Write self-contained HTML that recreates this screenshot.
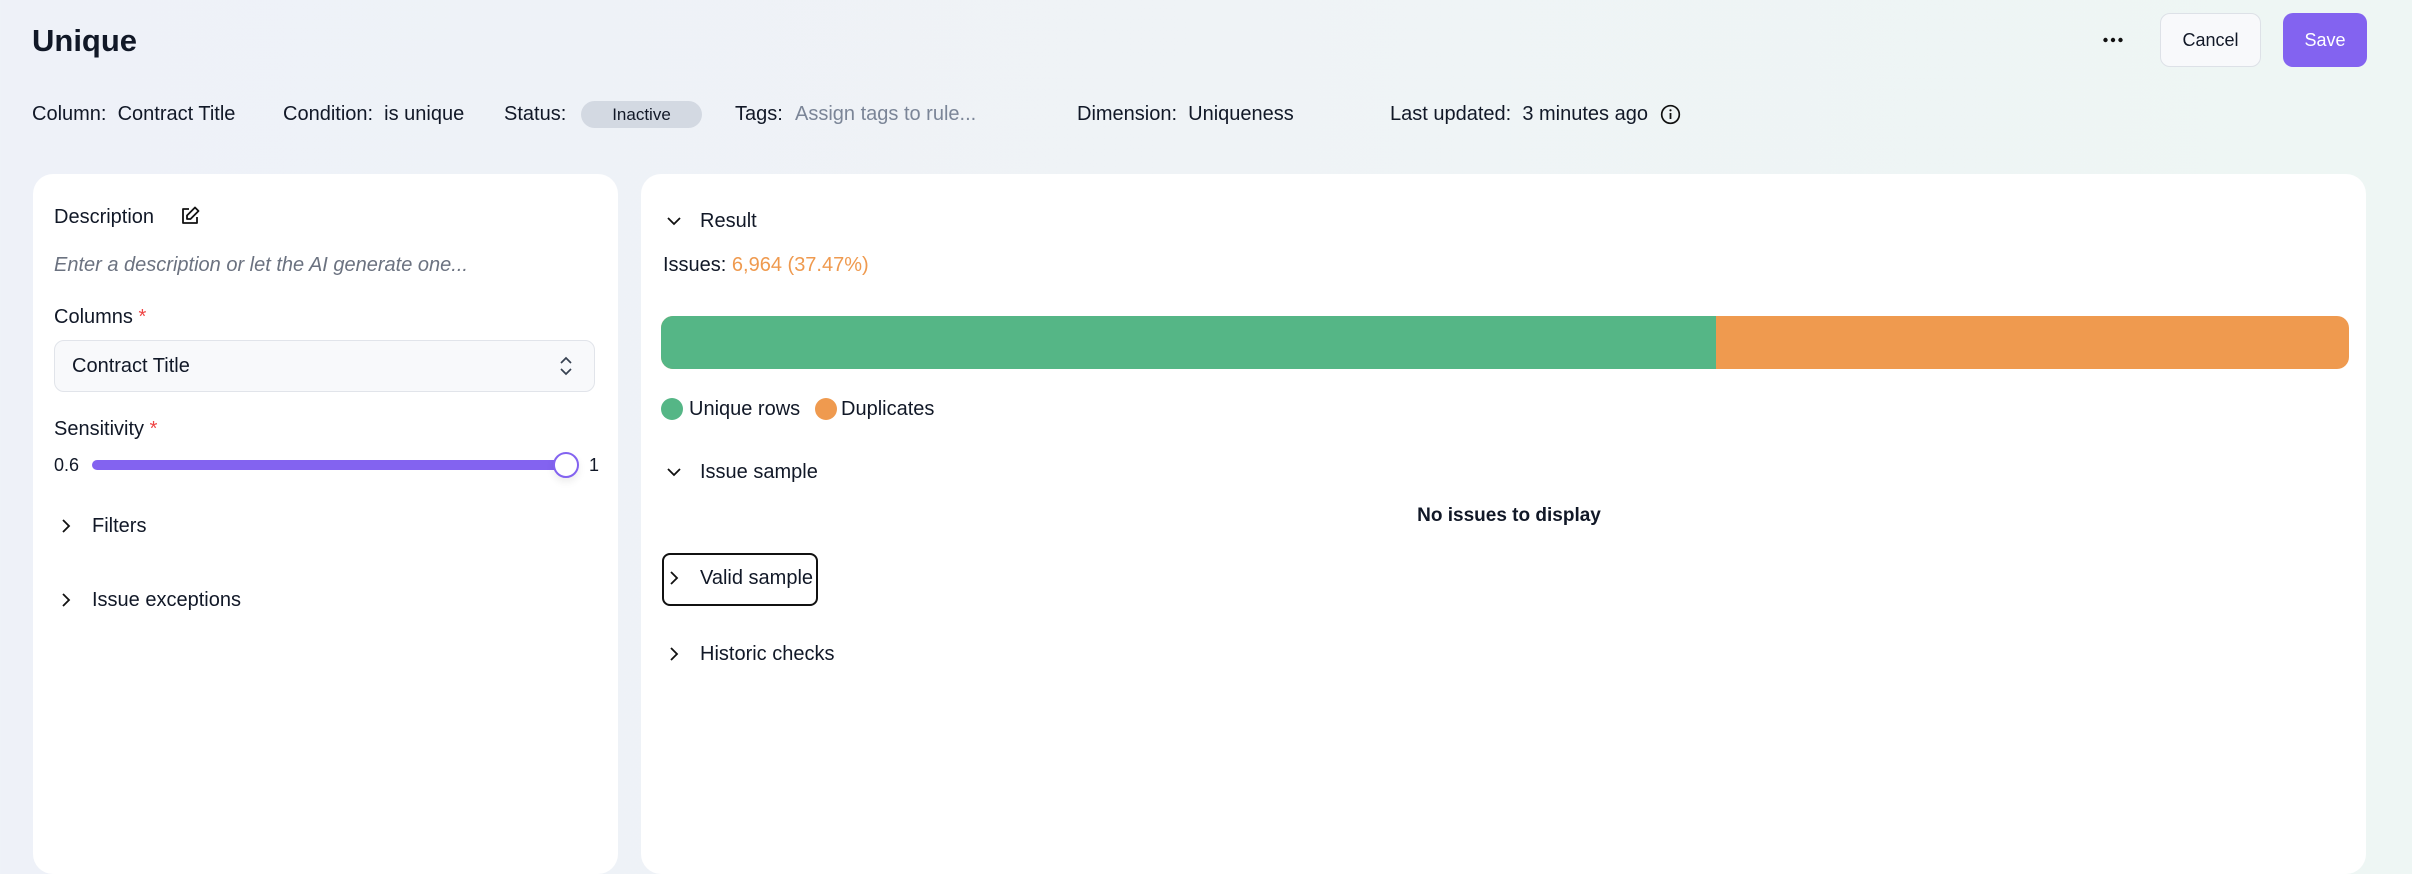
<!DOCTYPE html>
<html><head><meta charset="utf-8"><style>
*{box-sizing:border-box;margin:0;padding:0}
body{width:2412px;height:818px;overflow:hidden;font-family:"Liberation Sans",sans-serif;color:#111827;background:linear-gradient(90deg,#eef1f8 0%,#eff3f6 50%,#eef6f4 100%);position:relative;font-size:20px}
.a{position:absolute;white-space:nowrap;line-height:1}
.card{position:absolute;background:#fff;border-radius:20px;top:174px;height:700px}
</style></head><body>
<div class="a" style="left:32px;top:25px;font-size:31px;font-weight:bold">Unique</div>

<svg class="a" style="left:2102px;top:36px" width="22" height="8"><circle cx="3.5" cy="4" r="2.2" fill="#111"/><circle cx="11" cy="4" r="2.2" fill="#111"/><circle cx="18.5" cy="4" r="2.2" fill="#111"/></svg>
<div class="a" style="left:2160px;top:13px;width:101px;height:54px;border:1.5px solid #dde1e7;border-radius:10px;background:#f8f9fb;display:flex;align-items:center;justify-content:center;font-size:18px">Cancel</div>
<div class="a" style="left:2283px;top:13px;width:84px;height:54px;border-radius:10px;background:#8363f0;color:#fff;display:flex;align-items:center;justify-content:center;font-size:18px">Save</div>

<div class="a" style="left:32px;top:104px">Column:&nbsp; Contract Title</div>
<div class="a" style="left:283px;top:104px">Condition:&nbsp; is unique</div>
<div class="a" style="left:504px;top:104px">Status:</div>
<div class="a" style="left:581px;top:101px;width:121px;height:27px;border-radius:14px;background:#d3d9e2;font-size:17px;display:flex;align-items:center;justify-content:center">Inactive</div>
<div class="a" style="left:735px;top:104px">Tags:</div>
<div class="a" style="left:795px;top:104px;color:#7b8597">Assign tags to rule...</div>
<div class="a" style="left:1077px;top:104px">Dimension:&nbsp; Uniqueness</div>
<div class="a" style="left:1390px;top:104px">Last updated:&nbsp; 3 minutes ago</div>
<svg class="a" style="left:1660px;top:104px" width="21" height="21" viewBox="0 0 21 21"><circle cx="10.5" cy="10.5" r="8.8" fill="none" stroke="#111" stroke-width="1.7"/><line x1="10.5" y1="9" x2="10.5" y2="15" stroke="#111" stroke-width="1.8"/><circle cx="10.5" cy="6.3" r="1.1" fill="#111"/></svg>

<div class="card" style="left:33px;width:585px"></div>
<div class="card" style="left:641px;width:1725px"></div>

<div class="a" style="left:54px;top:207px">Description</div>
<svg class="a" style="left:179px;top:205px" width="22" height="22" viewBox="0 0 22 22" fill="none" stroke="#111" stroke-width="1.8" stroke-linejoin="round"><path d="M10 4H4v14h14v-6"/><path d="M16 2.5l3.5 3.5-8 8H8v-3.5z"/></svg>
<div class="a" style="left:54px;top:255px;font-style:italic;color:#6b7280">Enter a description or let the AI generate one...</div>
<div class="a" style="left:54px;top:307px">Columns <span style="color:#ef4444">*</span></div>
<div class="a" style="left:54px;top:340px;width:541px;height:52px;border:1.5px solid #e1e4ea;border-radius:10px;background:#f8f9fb"></div>
<div class="a" style="left:72px;top:356px">Contract Title</div>
<svg class="a" style="left:558px;top:355px" width="16" height="22" viewBox="0 0 16 22" fill="none" stroke="#374151" stroke-width="1.7"><path d="M3 8l5-5 5 5M3 14l5 5 5-5"/></svg>
<div class="a" style="left:54px;top:419px">Sensitivity <span style="color:#ef4444">*</span></div>
<div class="a" style="left:54px;top:456px;font-size:18px">0.6</div>
<div class="a" style="left:92px;top:460px;width:474px;height:10px;border-radius:5px;background:#8363f0"></div>
<div class="a" style="left:553px;top:452px;width:26px;height:26px;border-radius:50%;background:#fff;border:2px solid #8363f0;box-shadow:0 4px 8px rgba(0,0,0,.08)"></div>
<div class="a" style="left:589px;top:456px;font-size:18px">1</div>
<svg class="a" style="left:60px;top:517px" width="12" height="18" viewBox="0 0 12 18" fill="none" stroke="#111" stroke-width="1.8"><path d="M3 3l6 6-6 6"/></svg>
<div class="a" style="left:92px;top:516px">Filters</div>
<svg class="a" style="left:60px;top:591px" width="12" height="18" viewBox="0 0 12 18" fill="none" stroke="#111" stroke-width="1.8"><path d="M3 3l6 6-6 6"/></svg>
<div class="a" style="left:92px;top:590px">Issue exceptions</div>

<svg class="a" style="left:665px;top:214px" width="18" height="14" viewBox="0 0 18 14" fill="none" stroke="#111" stroke-width="1.8"><path d="M3 4l6 6 6-6"/></svg>
<div class="a" style="left:700px;top:211px">Result</div>
<div class="a" style="left:663px;top:255px">Issues: <span style="color:#ef9a4f">6,964 (37.47%)</span></div>
<div class="a" style="left:661px;top:316px;width:1688px;height:53px;border-radius:12px;background:#ef9a4f;overflow:hidden"><div style="width:1055px;height:100%;background:#55b686"></div></div>
<div class="a" style="left:661px;top:398px;width:22px;height:22px;border-radius:50%;background:#55b686"></div>
<div class="a" style="left:689px;top:399px">Unique rows</div>
<div class="a" style="left:815px;top:398px;width:22px;height:22px;border-radius:50%;background:#ef9a4f"></div>
<div class="a" style="left:841px;top:399px">Duplicates</div>
<svg class="a" style="left:665px;top:465px" width="18" height="14" viewBox="0 0 18 14" fill="none" stroke="#111" stroke-width="1.8"><path d="M3 4l6 6 6-6"/></svg>
<div class="a" style="left:700px;top:462px">Issue sample</div>
<div class="a" style="left:1509px;top:506px;transform:translateX(-50%);font-weight:bold;font-size:19px">No issues to display</div>
<div class="a" style="left:662px;top:553px;width:156px;height:53px;border:2.5px solid #111;border-radius:8px"></div>
<svg class="a" style="left:668px;top:569px" width="12" height="18" viewBox="0 0 12 18" fill="none" stroke="#111" stroke-width="1.8"><path d="M3 3l6 6-6 6"/></svg>
<div class="a" style="left:700px;top:568px">Valid sample</div>
<svg class="a" style="left:668px;top:645px" width="12" height="18" viewBox="0 0 12 18" fill="none" stroke="#111" stroke-width="1.8"><path d="M3 3l6 6-6 6"/></svg>
<div class="a" style="left:700px;top:644px">Historic checks</div>
</body></html>
